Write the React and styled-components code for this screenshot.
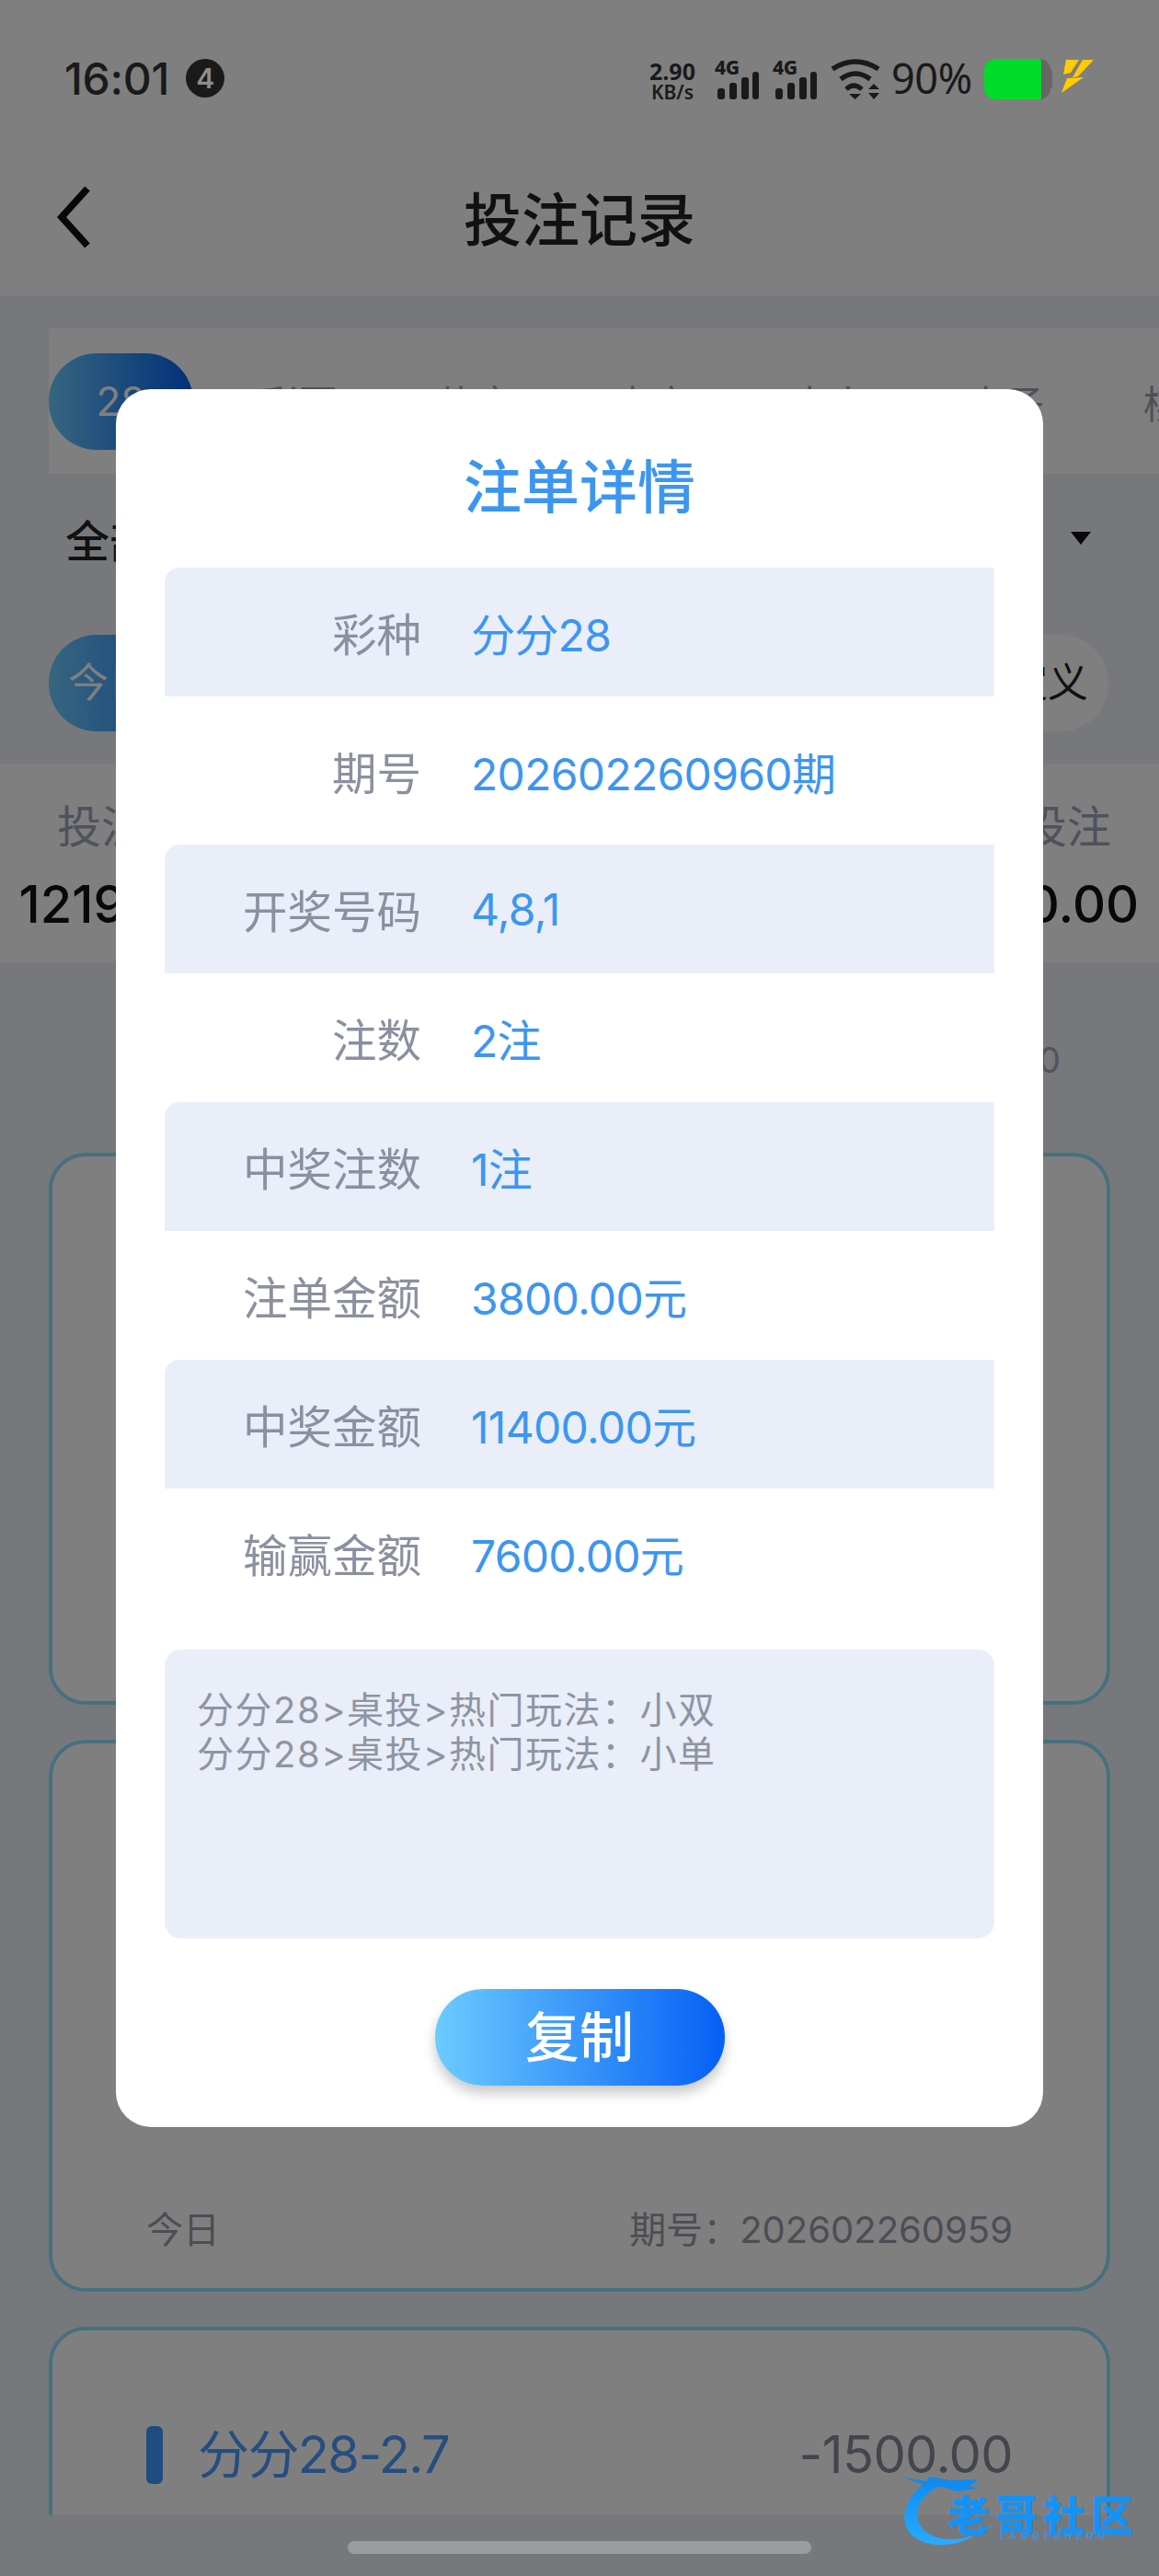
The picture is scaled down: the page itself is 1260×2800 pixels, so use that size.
import React from 'react'
import styled, { createGlobalStyle } from 'styled-components'

const FONT = `Inter, "Noto Sans CJK SC", sans-serif`
const COLON = '\uFF1A'

const GlobalStyle = createGlobalStyle`
  html, body { margin: 0; padding: 0; background: #eef0f8; }
  * { box-sizing: border-box; }
  body { font-family: ${FONT}; }
`

const TABS = ['彩票', '体育', '电竞', '真人', '电子', '棋牌']

const DETAILS = [
  { label: '彩种', value: '分分28', shaded: true },
  { label: '期号', value: '202602260960期', tall: true },
  { label: '开奖号码', value: '4,8,1', shaded: true },
  { label: '注数', value: '2注' },
  { label: '中奖注数', value: '1注', shaded: true },
  { label: '注单金额', value: '3800.00元' },
  { label: '中奖金额', value: '11400.00元', shaded: true },
  { label: '输赢金额', value: '7600.00元' },
]

function App() {
  return (
    <Screen>
      <GlobalStyle />
      <Header>
        <StatusBar>
          <Time>16:01</Time>
          <NoticeBadge>4</NoticeBadge>
          <StatusRight>
            <Speed>
              <b>2.90</b>
              <span>KB/s</span>
            </Speed>
            <Signal />
            <Signal />
            <WifiIcon />
            <Percent>90%</Percent>
            <Battery>
              <BatteryFill />
            </Battery>
            <BoltIcon />
          </StatusRight>
        </StatusBar>

        <NavBar>
          <BackIcon />
          <PageTitle>投注记录</PageTitle>
        </NavBar>
      </Header>

      <TabBar>
        <ActiveTab>28</ActiveTab>
        {TABS.map((t) => (
          <Tab key={t}>{t}</Tab>
        ))}
      </TabBar>

      <FilterRow>
        <span>全部</span>
        <Caret />
      </FilterRow>

      <DateRow>
        <DatePill $active>今日</DatePill>
        <DatePill>自定义</DatePill>
      </DateRow>

      <StatsBand>
        <Stat>
          <StatLabel>投注金额</StatLabel>
          <StatValue>121900.00</StatValue>
        </Stat>
        <Stat>
          <StatLabel>有效投注</StatLabel>
          <StatValue>12000.00</StatValue>
        </Stat>
      </StatsBand>

      <CountRow>0</CountRow>

      <CardList>
        <Card />
        <Card>
          <CardFooter>
            <span>今日</span>
            <span>{`期号${COLON}202602260959`}</span>
          </CardFooter>
        </Card>
        <Card>
          <CardHead>
            <CardTitle>
              <TitleMark />
              <CardName>分分28-2.7</CardName>
            </CardTitle>
            <Amount>-1500.00</Amount>
          </CardHead>
        </Card>
      </CardList>

      <Dim />

      <Modal>
        <ModalTitle>注单详情</ModalTitle>
        <DetailList>
          {DETAILS.map((d) => (
            <DetailRow key={d.label} $shaded={d.shaded} $tall={d.tall}>
              <DetailLabel>{d.label}</DetailLabel>
              <DetailValue>{d.value}</DetailValue>
            </DetailRow>
          ))}
        </DetailList>
        <NoteBox>
          <div>{`分分28>桌投>热门玩法${COLON}小双`}</div>
          <div>{`分分28>桌投>热门玩法${COLON}小单`}</div>
        </NoteBox>
        <CopyButton>复制</CopyButton>
      </Modal>

      <HomeBar />
      <Watermark>
        <DragonIcon />
        <WatermarkName>老哥社区</WatermarkName>
        <WatermarkSub>LAOGESHEQU</WatermarkSub>
      </Watermark>
    </Screen>
  )
}

export default App

function Signal() {
  return (
    <SignalWrap>
      <SignalText>4G</SignalText>
      <svg width="48" height="30" viewBox="0 0 48 30">
        <rect x="3" y="18" width="8" height="12" rx="3" fill="#1a1a1a" />
        <rect x="16" y="12" width="8" height="18" rx="3" fill="#1a1a1a" />
        <rect x="29" y="6" width="8" height="24" rx="3" fill="#1a1a1a" />
        <rect x="41" y="0" width="7" height="30" rx="3" fill="#1a1a1a" />
      </svg>
    </SignalWrap>
  )
}

function WifiIcon() {
  return (
    <svg width="54" height="44" viewBox="0 0 54 44" fill="none" stroke="#1a1a1a" strokeWidth="5.5" strokeLinecap="butt">
      <path d="M2 11 Q27 -5 52 11" />
      <path d="M11 22 Q27 10 43 22" />
      <path d="M17 33 Q25 25 34 33" strokeWidth="5" />
      <path d="M20 38 H33 L26.5 44 Z" fill="#1a1a1a" stroke="none" />
      <path d="M41 33 L47 27 L53 33 Z M41 37 H53 L47 44 Z" fill="#1a1a1a" stroke="none" />
    </svg>
  )
}

function BoltIcon() {
  return (
    <svg width="36" height="38" viewBox="0 0 36 38">
      <path d="M5 1 H19 L10 15 L2 17 Z" fill="#ffcc00" />
      <path d="M23 1 H35 L18 19 L12 20 Z" fill="#ffcc00" />
      <path d="M6 21 L24 20 L0 37 Z" fill="#ffcc00" />
    </svg>
  )
}

function BackIcon() {
  return (
    <BackSvg width="40" height="68" viewBox="0 0 40 68" fill="none">
      <path d="M35 3 L7 34 L35 65" stroke="#111" strokeWidth="7.5" strokeLinejoin="miter" />
    </BackSvg>
  )
}

function DragonIcon() {
  return (
    <DragonSvg width="110" height="80" viewBox="0 0 110 80">
      <defs>
        <linearGradient id="dragonFill" x1="0" y1="0" x2="0" y2="1">
          <stop offset="0" stopColor="#0d8cf2" />
          <stop offset="1" stopColor="#27adff" />
        </linearGradient>
      </defs>
      <path
        d="M28 6 C8 18 -3 40 3 56 C10 76 44 82 70 70 L100 52 C84 66 58 74 36 68 C16 62 10 42 20 28 C26 20 34 14 44 10 Z"
        fill="url(#dragonFill)"
      />
      <path d="M0 3 L26 7 L28 2 L50 6 L82 5 L72 12 L80 15 L58 18 L44 13 L26 12 Z" fill="#0d8cf2" />
    </DragonSvg>
  )
}

const Screen = styled.div`
  position: relative;
  width: 1260px;
  height: 2800px;
  overflow: hidden;
  background: #eef0f8;
  font-family: ${FONT};
`

const Header = styled.div`
  background: #fff;
`

const StatusBar = styled.div`
  position: relative;
  z-index: 3;
  height: 152px;
  padding: 64px 70px 0 70px;
  display: flex;
  align-items: flex-start;
  color: #1a1a1a;
`

const Time = styled.div`
  font-size: 48px;
  font-weight: 500;
  line-height: 44px;
  letter-spacing: -0.3px;
`

const NoticeBadge = styled.div`
  width: 42px;
  height: 42px;
  margin-left: 18px;
  border-radius: 50%;
  background: #1a1a1a;
  color: #8d8d8d;
  font-size: 30px;
  font-weight: 600;
  line-height: 42px;
  text-align: center;
`

const StatusRight = styled.div`
  margin-left: auto;
  margin-right: 0;
  display: flex;
  align-items: flex-start;
`

const Speed = styled.div`
  width: 52px;
  margin-right: 20px;
  margin-top: 1px;
  display: flex;
  flex-direction: column;
  align-items: center;
  font-family: "Noto Sans", sans-serif;
  b { font-size: 25px; line-height: 24px; font-weight: 700; }
  span { font-size: 21px; line-height: 21px; font-weight: 600; margin-top: 1px; }
`

const SignalWrap = styled.div`
  width: 63px;
  height: 44px;
  position: relative;
  svg { position: absolute; left: 0; top: 14px; }
`

const SignalText = styled.div`
  position: absolute;
  left: 0;
  top: 0;
  font-family: "Noto Sans", sans-serif;
  font-size: 21px;
  line-height: 19px;
  font-weight: 800;
  letter-spacing: -0.5px;
`

const Percent = styled.div`
  margin-left: 12px;
  margin-top: -4px;
  width: 90px;
  font-size: 45px;
  line-height: 50px;
  letter-spacing: -0.4px;
  font-family: "Noto Sans", sans-serif;
`

const Battery = styled.div`
  position: relative;
  margin-left: 11px;
  margin-right: 12px;
  width: 72px;
  height: 44px;
  background: #666;
  border-radius: 12px;
  &::after {
    content: '';
    position: absolute;
    right: -2px;
    top: 12px;
    width: 4px;
    height: 20px;
    border-radius: 2px;
    background: #666;
  }
`

const BatteryFill = styled.div`
  width: 62px;
  height: 44px;
  background: #00dc28;
  border-radius: 12px 2px 2px 12px;
`

const NavBar = styled.div`
  position: relative;
  height: 170px;
  padding-bottom: 6px;
  display: flex;
  align-items: center;
  justify-content: center;
`

const BackSvg = styled.svg`
  position: absolute;
  left: 60px;
  top: 50px;
`

const PageTitle = styled.div`
  font-size: 63px;
  font-weight: 500;
  color: #222;
`

const TabBar = styled.div`
  margin: 35px 0 0 53px;
  height: 158px;
  background: #fff;
  display: flex;
  align-items: center;
  overflow: hidden;
`

const ActiveTab = styled.div`
  flex: 0 0 157px;
  height: 105px;
  margin-right: 19px;
  border-radius: 52px;
  background: linear-gradient(90deg, #6ccbff, #0560f5);
  color: #fff;
  font-size: 44px;
  line-height: 105px;
  text-align: center;
`

const Tab = styled.div`
  flex: 0 0 192px;
  text-align: center;
  font-size: 42px;
  color: #9ea2b0;
  font-family: "Noto Sans CJK SC", sans-serif;
`

const FilterRow = styled.div`
  height: 140px;
  padding: 0 74px 0 71px;
  display: flex;
  align-items: center;
  justify-content: space-between;
  font-size: 48px;
  font-weight: 500;
  color: #222;
`

const Caret = styled.div`
  width: 0;
  height: 0;
  border-left: 11px solid transparent;
  border-right: 11px solid transparent;
  border-top: 14px solid #111;
`

const DateRow = styled.div`
  margin-top: 35px;
  padding: 0 55px 0 53px;
  display: flex;
  justify-content: space-between;
`

const DatePill = styled.div`
  width: 220px;
  height: 105px;
  border-radius: 52px;
  padding: 0 22px 0 21px;
  background: ${(p) => (p.$active ? 'linear-gradient(90deg, #6ccbff, #0560f5)' : '#fff')};
  color: ${(p) => (p.$active ? '#fff' : '#222')};
  font-size: 44px;
  line-height: 105px;
  text-align: ${(p) => (p.$active ? 'left' : 'right')};
`

const StatsBand = styled.div`
  margin-top: 35px;
  height: 216px;
  padding-left: 10px;
  background: #fff;
  display: flex;
  justify-content: space-between;
`

const Stat = styled.div`
  width: 296px;
  padding-top: 36px;
  text-align: center;
`

const StatLabel = styled.div`
  font-size: 48px;
  line-height: 66px;
  color: #9ea2b6;
`

const StatValue = styled.div`
  margin-top: 18px;
  font-size: 56px;
  line-height: 66px;
  font-weight: 500;
  color: #111;
`

const CountRow = styled.div`
  height: 207px;
  padding: 80px 107px 0 0;
  text-align: right;
  font-size: 38px;
  line-height: 52px;
  color: #a4a6b6;
`

const CardList = styled.div`
  height: 1481px;
  padding: 0 53px;
  display: flex;
  flex-direction: column;
  gap: 38px;
  overflow: hidden;
`

const Card = styled.div`
  flex: 0 0 600px;
  border: 4px solid #8ee0ff;
  border-radius: 40px;
  background: #fff;
  padding: 0 102px;
  display: flex;
  flex-direction: column;
`

const CardHead = styled.div`
  margin-top: 101px;
  display: flex;
  align-items: center;
  justify-content: space-between;
`

const CardTitle = styled.div`
  display: flex;
  align-items: center;
  gap: 38px;
`

const CardName = styled.div`
  font-size: 56px;
  line-height: 63px;
  letter-spacing: -1.6px;
  color: #4a9cff;
`

const TitleMark = styled.div`
  width: 18px;
  height: 63px;
  border-radius: 6px;
  background: #3e9bff;
`

const Amount = styled.div`
  font-size: 56px;
  letter-spacing: -0.6px;
  color: #888a9c;
`

const CardFooter = styled.div`
  margin-top: auto;
  margin-bottom: 39px;
  display: flex;
  justify-content: space-between;
  font-size: 40px;
  line-height: 48px;
  letter-spacing: 0;
  color: #999bab;
`

const Dim = styled.div`
  position: absolute;
  inset: 0;
  z-index: 1;
  background: rgba(0, 0, 0, 0.5);
`

const Modal = styled.div`
  position: absolute;
  z-index: 2;
  left: 126px;
  top: 423px;
  width: 1008px;
  height: 1889px;
  padding: 0 53px;
  background: #fff;
  border-radius: 38px;
  display: flex;
  flex-direction: column;
`

const ModalTitle = styled.div`
  height: 194px;
  padding-top: 68px;
  text-align: center;
  font-size: 63px;
  line-height: 76px;
  font-weight: 500;
  color: #3c96f0;
`

const DetailList = styled.div`
  display: flex;
  flex-direction: column;
`

const DetailRow = styled.div`
  height: ${(p) => (p.$tall ? '161px' : '140px')};
  display: flex;
  align-items: center;
  gap: 54px;
  background: ${(p) => (p.$shaded ? '#e9eef9' : 'transparent')};
  border-top-left-radius: 16px;
  font-size: 48px;
`

const DetailLabel = styled.div`
  width: 279px;
  font-size: 48.5px;
  text-align: right;
  color: #8b90a0;
`

const DetailValue = styled.div`
  color: #3c96f0;
  letter-spacing: -0.7px;
`

const NoteBox = styled.div`
  margin-top: 35px;
  height: 314px;
  padding: 42px 35px;
  border-radius: 18px;
  background: #e9eef9;
  font-size: 40px;
  line-height: 48px;
  letter-spacing: 1.5px;
  color: #8f94a2;
`

const CopyButton = styled.div`
  width: 315px;
  height: 105px;
  margin: 55px auto 0;
  border-radius: 52px;
  background: linear-gradient(90deg, #6ccbff, #0560f5);
  box-shadow: 0 8px 14px rgba(0, 0, 0, 0.22);
  color: #fff;
  font-size: 59px;
  font-weight: 500;
  line-height: 105px;
  text-align: center;
`

const HomeBar = styled.div`
  position: absolute;
  z-index: 3;
  left: 378px;
  top: 2762px;
  width: 504px;
  height: 14px;
  border-radius: 7px;
  background: #9b9ca1;
`

const Watermark = styled.div`
  position: absolute;
  z-index: 4;
  left: 982px;
  top: 2690px;
  width: 260px;
  height: 80px;
`

const DragonSvg = styled.svg`
  position: absolute;
  left: 0;
  top: 0;
`

const WatermarkName = styled.div`
  position: absolute;
  left: 48px;
  top: 18px;
  font-family: "Noto Sans CJK SC", sans-serif;
  font-size: 46px;
  line-height: 46px;
  font-weight: 900;
  letter-spacing: 6px;
  white-space: nowrap;
  color: #1592f5;
`

const WatermarkSub = styled.div`
  position: absolute;
  left: 105px;
  top: 61px;
  font-size: 10px;
  line-height: 10px;
  font-weight: 700;
  letter-spacing: 5px;
  color: #3f93d8;
`
